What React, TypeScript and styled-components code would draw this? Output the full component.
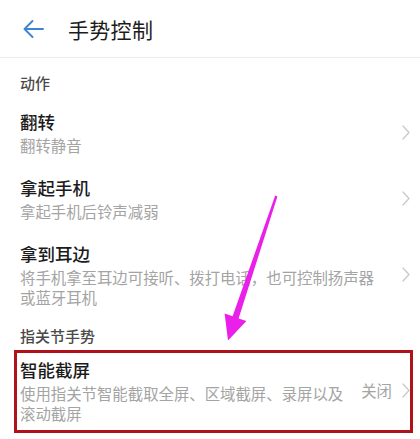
import styled, { createGlobalStyle, css } from "styled-components";

const GlobalStyle = createGlobalStyle`
  html, body {
    margin: 0;
    padding: 0;
    background: #fff;
  }
  body {
    font-family: "Noto Sans CJK SC", "Noto Sans", sans-serif;
    -webkit-font-smoothing: antialiased;
  }
`;

const Page = styled.div`
  position: relative;
  width: 420px;
  height: 439px;
  overflow: hidden;
  background: #fff;
`;

const Header = styled.div`
  height: 57px;
  display: flex;
  align-items: center;
  gap: 24px;
  padding-left: 22px;
  border-bottom: 1px solid #ececec;
`;

const BackButton = styled.div`
  width: 22px;
  height: 20px;
  display: flex;
  align-items: center;
  justify-content: center;
`;

const HeaderTitle = styled.h1`
  margin: 0;
  font-size: 21px;
  font-weight: 400;
  line-height: 28px;
  color: #1c1c1c;
  letter-spacing: 0.3px;
`;

const SectionTitle = styled.div<{ $first?: boolean }>`
  padding: ${(p) => (p.$first ? "14px 0 5px" : "8px 0 0")};
  padding-left: 20px;
  font-size: 15px;
  line-height: 22px;
  font-weight: 500;
  color: #4a4a4a;
`;

const Row = styled.div<{ $highlight?: boolean }>`
  position: relative;
  display: flex;
  align-items: center;
  padding: 10px 10px 10px 20px;

  ${(p) =>
    p.$highlight &&
    css`
      &::after {
        content: "";
        position: absolute;
        top: 3px;
        bottom: 0;
        left: 14px;
        right: 7px;
        border: 3.5px solid #b0111b;
        pointer-events: none;
      }
    `}
`;

const RowText = styled.div`
  flex: 1;
  min-width: 0;
`;

const RowTitle = styled.div`
  font-size: 17.5px;
  line-height: 26px;
  font-weight: 500;
  color: #1b1b1b;
`;

const RowSub = styled.div`
  font-size: 15.4px;
  line-height: 20px;
  color: #a4a4a4;
`;

const Trailing = styled.div`
  display: flex;
  align-items: center;
  gap: 10px;
  margin-left: 14px;
`;

const Value = styled.span`
  font-size: 15.4px;
  line-height: 20px;
  color: #a4a4a4;
`;

const Annotation = styled.svg`
  position: absolute;
  left: 0;
  top: 0;
  pointer-events: none;
`;

const BackArrow = () => (
  <svg width="22" height="20" viewBox="0 0 22 20" fill="none">
    <path
      d="M21 10H2.5M10.5 2L2.5 10L10.5 18"
      stroke="#3d84d4"
      strokeWidth="1.9"
      strokeLinecap="round"
      strokeLinejoin="round"
    />
  </svg>
);

const Chevron = () => (
  <svg width="8" height="15" viewBox="0 0 8 15" fill="none">
    <path
      d="M1 1L7 7.5L1 14"
      stroke="#cbcbcb"
      strokeWidth="1.4"
      strokeLinecap="round"
      strokeLinejoin="round"
    />
  </svg>
);

type Item = {
  title: string;
  sub: string;
  value?: string;
  highlight?: boolean;
};

const actions: Item[] = [
  { title: "翻转", sub: "翻转静音" },
  { title: "拿起手机", sub: "拿起手机后铃声减弱" },
  {
    title: "拿到耳边",
    sub: "将手机拿至耳边可接听、拨打电话，也可控制扬声器或蓝牙耳机",
  },
];

const knuckle: Item[] = [
  {
    title: "智能截屏",
    sub: "使用指关节智能截取全屏、区域截屏、录屏以及滚动截屏",
    value: "关闭",
    highlight: true,
  },
];

const SettingRow = ({ item }: { item: Item }) => (
  <Row $highlight={item.highlight}>
    <RowText>
      <RowTitle>{item.title}</RowTitle>
      <RowSub>{item.sub}</RowSub>
    </RowText>
    <Trailing>
      {item.value && <Value>{item.value}</Value>}
      <Chevron />
    </Trailing>
  </Row>
);

const App = () => {
  return (
    <Page>
      <GlobalStyle />
      <Header>
        <BackButton>
          <BackArrow />
        </BackButton>
        <HeaderTitle>手势控制</HeaderTitle>
      </Header>

      <SectionTitle $first>动作</SectionTitle>
      {actions.map((item) => (
        <SettingRow key={item.title} item={item} />
      ))}

      <SectionTitle>指关节手势</SectionTitle>
      {knuckle.map((item) => (
        <SettingRow key={item.title} item={item} />
      ))}

      {/* magenta pointer drawn over the screenshot */}
      <Annotation width="420" height="439" viewBox="0 0 420 439">
        <polygon
          points="275.2,195.5 277.4,196.6 238.6,318.4 246.4,321 228,340.5 224.6,313.6 232.6,316.3"
          fill="#ea1fea"
        />
      </Annotation>
    </Page>
  );
};

export default App;
